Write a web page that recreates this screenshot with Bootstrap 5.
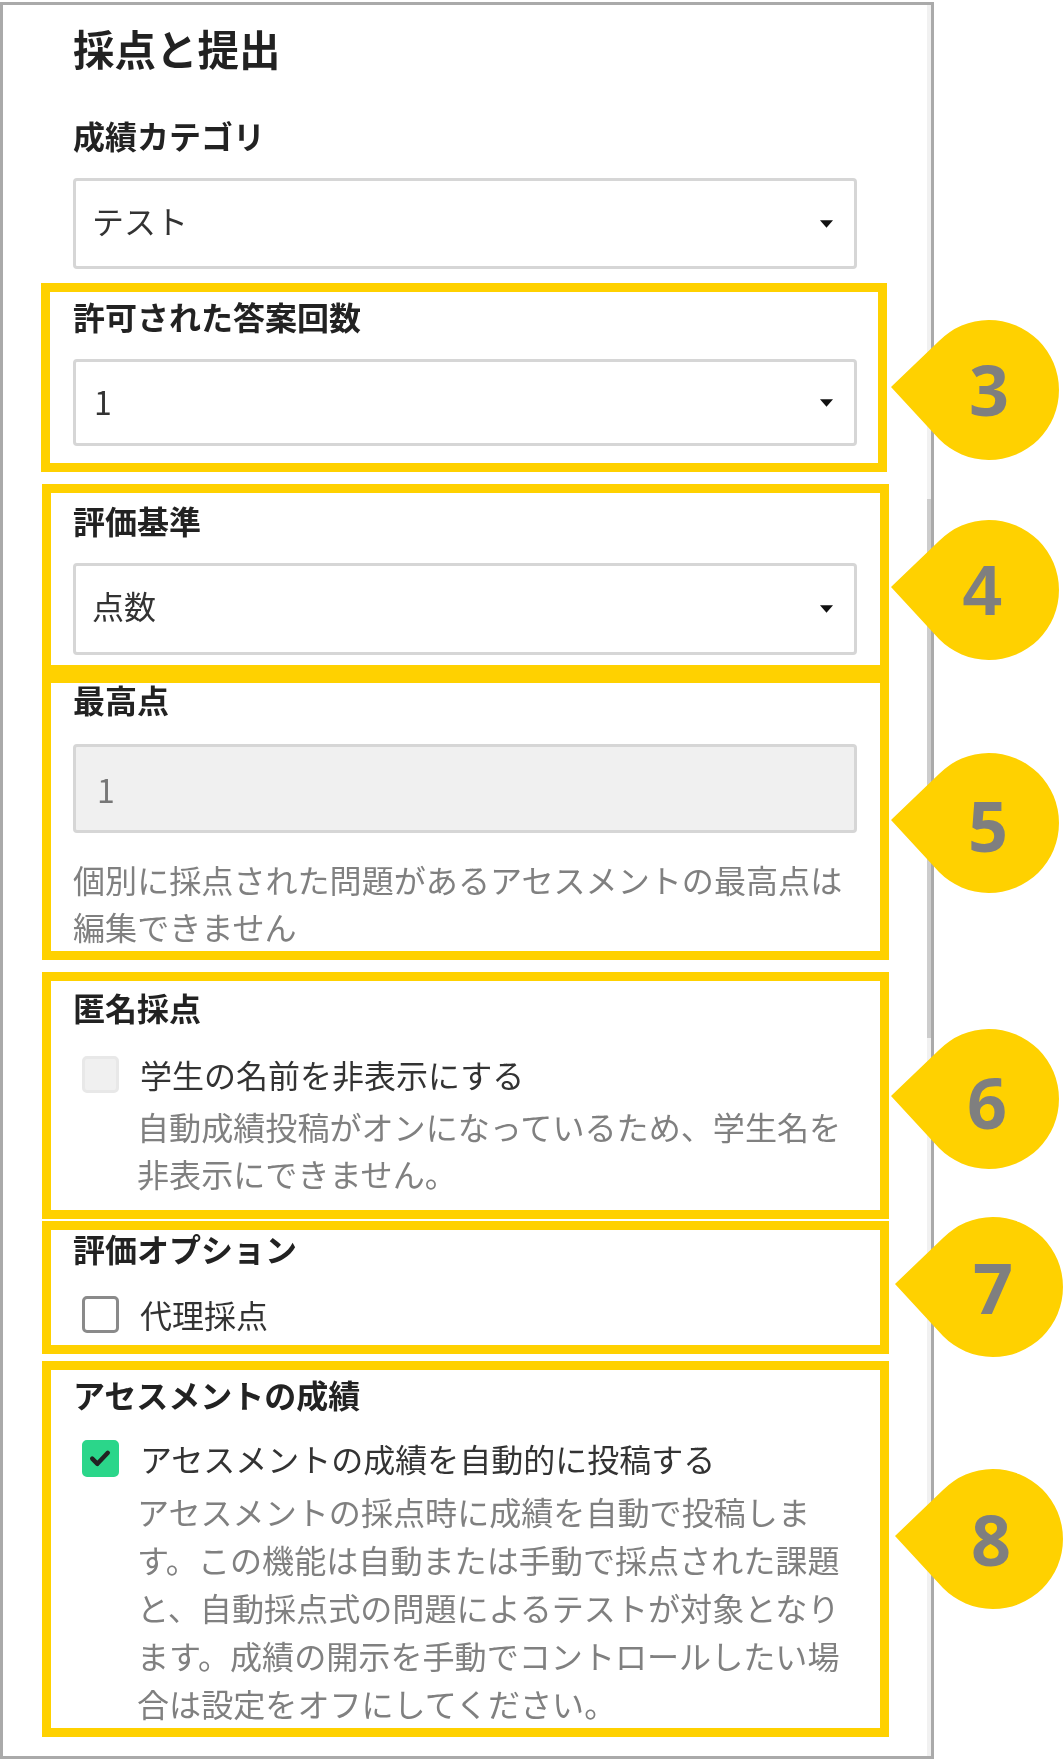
<!DOCTYPE html>
<html lang="ja"><head><meta charset="utf-8"><title>採点と提出</title>
<link rel="stylesheet" href="https://cdn.jsdelivr.net/npm/bootstrap@5.3.0/dist/css/bootstrap.min.css">
<style>
html,body{margin:0;background:#fff;font-family:"Noto Sans CJK JP","Liberation Sans",sans-serif}
.stage{position:relative;width:1064px;height:1761px;overflow:hidden}
.panel{width:934px;height:1757px;margin-top:2px;border:3px solid #aaa;padding:0 74px 0 70px;color:#333;filter:blur(.45px)}
.sect-title{font-size:41.5px;line-height:86px;height:90px;font-weight:700;color:#222;margin:0 0 17px}
.fld-label{display:block;font-size:32px;line-height:46px;font-weight:700;color:#222;margin:0 0 20px;white-space:nowrap}
.fld-label.m22{margin-bottom:22px}.fld-label.m24{margin-bottom:24px}.fld-label.m25{margin-bottom:25px}
.gap-a{margin-top:24px}.gap-b{margin-top:51px}.gap-f{margin-top:21px}.gap-c{margin-top:34px}.gap-d{margin-top:28px}.gap-e{margin-top:38px}
.panel .form-select,.panel .form-control{height:91px;font-size:32px;line-height:46px;color:#333;border:3px solid #d6d6d6;border-radius:4px;padding:0 60px 8px 16px;
 background-image:url("data:image/svg+xml,%3Csvg xmlns='http://www.w3.org/2000/svg' viewBox='0 0 14 8'%3E%3Cpath d='M0 0h14L7 8z' fill='%23111'/%3E%3C/svg%3E");background-size:13px 8px;background-position:right 21px center;background-repeat:no-repeat}
.panel .form-select.h87{height:87px;padding:0 60px 4px 18px}.panel .form-select.h92{height:92px}
.panel .form-control:disabled{height:89px;background:#f0f0f0;color:#777;padding:0 0 0 21px;background-image:none}
.hint-txt{font-size:32.1px;line-height:47px;color:#808080;margin:0;white-space:nowrap}
.hint-top{margin-top:23px}
.chk-row{display:flex;align-items:center;gap:21px;padding-left:9px;height:38px;margin:0;font-size:32px;color:#333;white-space:nowrap}
.chk-row .form-check-input{width:37px;height:37px;margin:0;flex:none;border:3px solid #8a8a8a;border-radius:5px}
.chk-row .form-check-input:disabled{background:#f0f0f0;border-color:#e8e8e8;opacity:1}
.chk-row .form-check-input:checked{background-color:#2bd68a;border-color:#2bd68a;background-size:85%;
 background-image:url("data:image/svg+xml,%3Csvg xmlns='http://www.w3.org/2000/svg' viewBox='0 0 20 20'%3E%3Cpath fill='none' stroke='%23222' stroke-width='3.4' stroke-linecap='round' stroke-linejoin='round' d='M4 10.5l4 4 8-8.5'/%3E%3C/svg%3E")}
.hint-ind{padding-left:64px;margin-top:10px}
.hint-ind.lh48{line-height:48px}
.mark-box{position:absolute;border:9px solid #ffd100}
.mb3{left:41px;top:283px;width:846px;height:189px}
.mb4{left:42px;top:484px;width:847px;height:190px}
.mb5{left:42px;top:674px;width:847px;height:286px}
.mb6{left:42px;top:972px;width:847px;height:247px}
.mb7{left:42px;top:1221px;width:847px;height:133px}
.mb8{left:42px;top:1361px;width:847px;height:376px}
.scroll-track{position:absolute;left:927px;top:5px;width:4px;height:1751px;background:#f1f1f1}
.scroll-thumb{position:absolute;left:927px;top:499px;width:4px;height:539px;background:#cdcdcd}
.drop{position:absolute;width:169px;height:140px}
.drop svg{position:absolute;inset:0}
.drop span{position:absolute;top:0;width:140px;text-align:center;font:700 70px/140px "Open Sans",sans-serif;color:#7f7f7f}
.p3{left:891px;top:320px}.p3 span{left:28px;top:-1px}
.p4{left:891px;top:520px}.p4 span{left:21px;top:1px;font-family:"Liberation Sans",sans-serif;font-size:70px}
.p5{left:891px;top:753px}.p5 span{left:27px;top:2px}
.p6{left:891px;top:1029px}.p6 span{left:26px;top:3px}
.p7{left:895px;top:1217px}.p7 span{left:28px}
.p8{left:895px;top:1469px}.p8 span{left:26px}
</style></head>
<body>
<div class="stage">
 <div class="scroll-track"></div><div class="scroll-thumb"></div>
 <div class="panel">
  <h2 class="sect-title">採点と提出</h2>
  <div><label class="fld-label">成績カテゴリ</label><select class="form-select"><option>テスト</option></select></div>
  <div class="gap-a"><label class="fld-label">許可された答案回数</label><select class="form-select h87"><option>1</option></select></div>
  <div class="gap-b"><label class="fld-label">評価基準</label><select class="form-select h92"><option>点数</option></select></div>
  <div class="gap-f"><label class="fld-label m22">最高点</label><input class="form-control" value="1" disabled>
   <p class="hint-txt hint-top">個別に採点された問題があるアセスメントの最高点は<br>編集できません</p></div>
  <div class="gap-c"><label class="fld-label m25">匿名採点</label>
   <label class="chk-row form-check"><input class="form-check-input" type="checkbox" disabled>学生の名前を非表示にする</label>
   <p class="hint-txt hint-ind">自動成績投稿がオンになっているため、学生名を<br>非表示にできません。</p></div>
  <div class="gap-d"><label class="fld-label m24">評価オプション</label>
   <label class="chk-row form-check"><input class="form-check-input" type="checkbox">代理採点</label></div>
  <div class="gap-e"><label class="fld-label m22">アセスメントの成績</label>
   <label class="chk-row form-check"><input class="form-check-input" type="checkbox" checked>アセスメントの成績を自動的に投稿する</label>
   <p class="hint-txt hint-ind lh48">アセスメントの採点時に成績を自動で投稿しま<br>す。この機能は自動または手動で採点された課題<br>と、自動採点式の問題によるテストが対象となり<br>ます。成績の開示を手動でコントロールしたい場<br>合は設定をオフにしてください。</p></div>
 </div>
 <div class="mark-box mb3"></div><div class="mark-box mb5"></div><div class="mark-box mb4"></div><div class="mark-box mb6"></div><div class="mark-box mb7"></div><div class="mark-box mb8"></div>
 <div class="drop p3"><svg viewBox="0 0 169 140"><path d="M0 67 48 21A70 70 0 1 1 48 119Z" fill="#ffd100"/></svg><span>3</span></div>
 <div class="drop p4"><svg viewBox="0 0 169 140"><path d="M0 67 48 21A70 70 0 1 1 48 119Z" fill="#ffd100"/></svg><span>4</span></div>
 <div class="drop p5"><svg viewBox="0 0 169 140"><path d="M0 67 48 21A70 70 0 1 1 48 119Z" fill="#ffd100"/></svg><span>5</span></div>
 <div class="drop p6"><svg viewBox="0 0 169 140"><path d="M0 67 48 21A70 70 0 1 1 48 119Z" fill="#ffd100"/></svg><span>6</span></div>
 <div class="drop p7"><svg viewBox="0 0 169 140"><path d="M0 67 48 21A70 70 0 1 1 48 119Z" fill="#ffd100"/></svg><span>7</span></div>
 <div class="drop p8"><svg viewBox="0 0 169 140"><path d="M0 67 48 21A70 70 0 1 1 48 119Z" fill="#ffd100"/></svg><span>8</span></div>
</div>
<script src="https://cdn.jsdelivr.net/npm/bootstrap@5.3.0/dist/js/bootstrap.bundle.min.js"></script>
</body></html>
